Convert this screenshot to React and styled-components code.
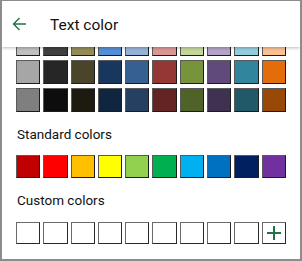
import styled, { createGlobalStyle } from 'styled-components';

const GlobalStyle = createGlobalStyle`
  html, body {
    margin: 0;
    padding: 0;
    background: #ffffff;
  }
  body {
    font-family: Roboto, 'Noto Sans', sans-serif;
  }
`;

const Frame = styled.div`
  box-sizing: border-box;
  width: 302px;
  height: 261px;
  border-top: 1px solid #8c8c8c;
  border-left: 2px solid #8c8c8c;
  border-right: 2px solid #8c8c8c;
  border-bottom: 2px solid #8c8c8c;
  background: #fff;
  overflow: hidden;
  display: flex;
  flex-direction: column;
`;

const Header = styled.header`
  position: relative;
  z-index: 1;
  flex: 0 0 46px;
  display: flex;
  align-items: center;
  gap: 22px;
  padding: 0 0 0 9px;
  background: #fff;
  box-shadow: 0 1px 3px rgba(0, 0, 0, 0.28);
`;

const BackButton = styled.button`
  border: 0;
  background: none;
  padding: 0;
  width: 17px;
  height: 17px;
  display: flex;
  align-items: center;
  justify-content: center;
  color: #217346;
`;

const Title = styled.h1`
  margin: 0;
  font-size: 15.5px;
  font-weight: 400;
  color: #111;
  padding-top: 2px;
`;

const Body = styled.div`
  flex: 1;
  overflow: hidden;
  padding: 0 14px;
`;

const Scrolled = styled.div`
  margin-top: -15px;
`;

const Grid = styled.div`
  display: grid;
  grid-template-columns: repeat(10, 1fr);
  column-gap: 3px;
  row-gap: 4px;
`;

const Swatch = styled.div`
  box-sizing: border-box;
  height: ${(p) => p.$h || 24}px;
  background: ${(p) => p.$color};
  border: 1px solid #1c1c1c;
  border-top-color: #5a5a5a;
  border-left-color: #5a5a5a;
`;

const EmptySwatch = styled.div`
  box-sizing: border-box;
  height: 22px;
  background: #fff;
  border: 1px solid #2a2a2a;
  border-top-color: #6a6a6a;
  border-left-color: #6a6a6a;
  display: flex;
  align-items: center;
  justify-content: center;
  color: #217346;
`;

const SectionLabel = styled.div`
  font-size: 13.5px;
  line-height: 20px;
  color: #111;
  margin: ${(p) => p.$top}px 0 ${(p) => p.$bottom}px 1px;
`;

const theme = [
  ['#BFBFBF', '#404040', '#948A54', '#558ED5', '#95B3D7', '#D99694', '#C3D69B', '#B3A2C7', '#93CDDD', '#FAC090'],
  ['#A6A6A6', '#262626', '#4A452A', '#17375E', '#376092', '#953735', '#77933C', '#604A7B', '#31859C', '#E46C0A'],
  ['#7F7F7F', '#0D0D0D', '#1D1B10', '#10253F', '#254061', '#632523', '#4F6228', '#3F3151', '#215968', '#984807'],
];

const standard = ['#C00000', '#FF0000', '#FFC000', '#FFFF00', '#92D050', '#00B050', '#00B0F0', '#0070C0', '#002060', '#7030A0'];

export default function App() {
  return (
    <>
      <GlobalStyle />
      <Frame>
        <Header>
          <BackButton aria-label="Back">
            <svg width="15" height="14" viewBox="0 0 15 14" fill="none" stroke="currentColor" strokeWidth="1.4">
              <path d="M14 7H1.5M7.5 1L1.5 7l6 6" />
            </svg>
          </BackButton>
          <Title>Text color</Title>
        </Header>
        <Body>
          <Scrolled>
            <Grid>
              {theme.flat().map((c, i) => (
                <Swatch key={i} $color={c} />
              ))}
            </Grid>
            <SectionLabel $top={12} $bottom={11}>Standard colors</SectionLabel>
            <Grid>
              {standard.map((c) => (
                <Swatch key={c} $color={c} $h={23} />
              ))}
            </Grid>
            <SectionLabel $top={12} $bottom={12}>Custom colors</SectionLabel>
            <Grid>
              {Array.from({ length: 9 }).map((_, i) => (
                <EmptySwatch key={i} />
              ))}
              <EmptySwatch>
                <svg width="14" height="14" viewBox="0 0 14 14" stroke="currentColor" strokeWidth="2">
                  <path d="M7 0v14M0 7h14" />
                </svg>
              </EmptySwatch>
            </Grid>
          </Scrolled>
        </Body>
      </Frame>
    </>
  );
}
